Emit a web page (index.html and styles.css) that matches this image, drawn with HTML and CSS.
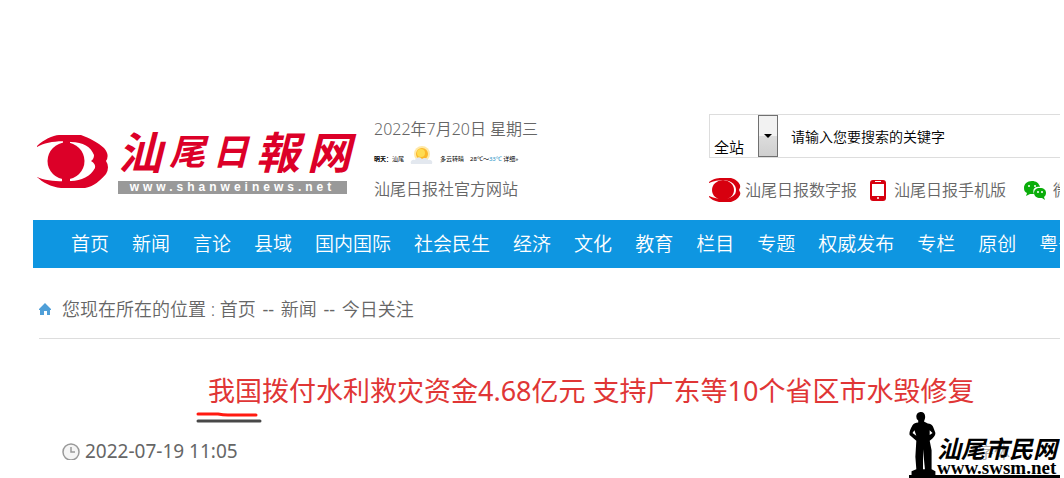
FILE: index.html
```html
<!DOCTYPE html>
<html lang="zh-CN">
<head>
  <meta charset="UTF-8">
  <title>我国拨付水利救灾资金4.68亿元 支持广东等10个省区市水毁修复</title>
  <meta name="viewport" content="width=device-width, initial-scale=1">
  <link rel="stylesheet" href="styles.css">
</head>
<body>

<div class="page">
  <header class="header">
    <a class="logo" href="#">
      <svg class="logo-eye" viewBox="0 0 72 54" aria-hidden="true">
        <path fill="#dc0028" d="M0 11C6 5 16 0 22 0H44C52 3 62 8 67 13Q73 20 69 26Q73 32 69 39C64 45 56 52 48 53H24C14 52 5 47 0 42Z"/>
        <path fill="#fff" d="M0 12C8 7 24 5 34 7C46 7 54 12 57 20Q57 24 54 26Q59 29 58 33C54 41 44 46 34 46C24 47 8 46 0 42Z"/>
        <circle cx="29" cy="26" r="18.5" fill="#dc0028"/>
        <path fill="#dc0028" d="M26 4h7v6h-7zM25 42h8v6h-8z"/>
      </svg>
      <span class="logo-text">
        <span class="logo-name"><b>汕</b><b class="small">尾</b><b class="small">日</b><b>報</b><b>网</b></span>
        <span class="logo-url">www.shanweinews.net</span>
      </span>
    </a>

    <div class="info">
      <div>2022年7月20日 星期三</div>
      <div class="weather">
        <span><b>明天：</b>汕尾</span>
        <svg class="sun" viewBox="0 0 24 20" aria-hidden="true">
          <circle cx="12" cy="8" r="8" fill="#ffe9a8"/>
          <circle cx="12" cy="8" r="6" fill="#fbb829"/>
          <circle cx="11" cy="7" r="4" fill="#ffdc50"/>
          <path fill="#e3e8ef" d="M1 18a3 3 0 0 1 4-4 4 4 0 0 1 7-1 4 4 0 0 1 6 1 3 3 0 0 1 4 4z"/>
        </svg>
        <span class="sky">多云转晴</span>
        <span>28℃～<i>33℃</i> 详细»</span>
      </div>
      <div>汕尾日报社官方网站</div>
    </div>

    <div class="tools">
      <form class="search">
        <div class="scope">
          <select aria-label="搜索范围">
            <option>全站</option>
          </select>
          <span class="arrow"></span>
        </div>
        <input type="text" aria-label="关键字" value="请输入您要搜索的关键字">
      </form>
      <div class="links">
        <a href="#">
          <svg class="icon-eye" viewBox="0 0 32 24" aria-hidden="true">
            <path fill="#d7000f" d="M0 4C5 0 10 0 14 0H22C26 1 30 4 31 7Q32 9 30 12Q32 15 31 17C29 21 25 23 22 24H10C5 23 2 21 0 19Z"/>
            <path fill="#fff" d="M0 5C4 3 10 2 15 2C23 3 27 7 27 12S23 20 15 21C10 21 4 20 0 18Z"/>
            <ellipse cx="14" cy="12" rx="11" ry="10" fill="#d7000f"/>
          </svg>
          汕尾日报数字报
        </a>
        <a href="#">
          <svg class="icon-phone" viewBox="0 0 16 21" aria-hidden="true">
            <rect width="16" height="21" rx="3" fill="#d7000f"/>
            <path fill="#fff" d="M2 4h12v12H2zM5 1h6v1H5z"/>
            <circle cx="8" cy="18" r="1" fill="#fff"/>
          </svg>
          汕尾日报手机版
        </a>
        <a href="#">
          <svg class="icon-wechat" viewBox="0 0 22 19" aria-hidden="true">
            <path fill="#0aad0a" d="M8 0C3 0 0 3 0 7c0 3 1 4 3 5l-1 3 4-2h4C8 8 11 5 16 6C15 2 12 0 8 0z"/>
            <path fill="#0aad0a" d="M16 7c-4 0-6 2-6 5s3 5 6 5l2 0 3 2-1-3c1-1 2-2 2-4 0-3-2-5-6-5z"/>
            <g fill="#fff"><circle cx="5" cy="5" r="1"/><circle cx="11" cy="5" r="1"/><circle cx="14" cy="11" r="1"/><circle cx="18" cy="11" r="1"/></g>
          </svg>
          微信
        </a>
      </div>
    </div>
  </header>

  <nav class="nav">
    <ul>
      <li><a href="#">首页</a></li>
      <li><a href="#">新闻</a></li>
      <li><a href="#">言论</a></li>
      <li><a href="#">县域</a></li>
      <li><a href="#">国内国际</a></li>
      <li><a href="#">社会民生</a></li>
      <li><a href="#">经济</a></li>
      <li><a href="#">文化</a></li>
      <li><a href="#">教育</a></li>
      <li><a href="#">栏目</a></li>
      <li><a href="#">专题</a></li>
      <li><a href="#">权威发布</a></li>
      <li><a href="#">专栏</a></li>
      <li><a href="#">原创</a></li>
      <li><a href="#">粤省</a></li>
    </ul>
  </nav>

  <div class="crumbs">
    <svg class="icon-home" viewBox="0 0 12 12" aria-hidden="true">
      <path fill="#4f9fd8" d="M6 0l6 6v1h-1v5H8V8H5v4H1V7H0V6z"/>
    </svg>
    <div>您现在所在的位置 : <a href="#">首页</a> <span class="sep">--</span> <a href="#">新闻</a> <span class="sep">--</span> <a href="#">今日关注</a></div>
  </div>

  <main class="article">
    <h1><span class="marked">我国<svg class="marks" viewBox="0 0 66 12" aria-hidden="true">
      <path d="M2 3H22Q27 4 32 4H60" stroke="#ff1a10"/>
      <path d="M2 10H64" stroke="#484848"/>
    </svg></span>拨付水利救灾资金4.68亿元 支持广东等10个省区市水毁修复</h1>
    <div class="meta">
      <svg class="icon-clock" viewBox="0 0 18 17" aria-hidden="true">
        <circle cx="9" cy="9" r="8" fill="#f5f5f5" stroke="#999" stroke-width="1.5"/>
        <path d="M9 4v5h4" fill="none" stroke="#999" stroke-width="1.5"/>
      </svg>
      <time datetime="2022-07-19T11:05">2022-07-19 11:05</time>
      <span class="font-size">【字体</span>
    </div>
  </main>

  <div class="watermark">
    <svg class="statue" viewBox="0 0 28 66" aria-hidden="true">
      <path d="M7 5C7 1 10 0 12 0C15 0 17 3 16 7L15 10L19 12C24 12 25 16 27 22Q27 26 21 30L23 40L23 60L27 62V66H2V62L7 60L6 47L7 30L0 24Q-1 21 3 14Q5 11 9 11L9 9Q7 8 7 5ZM5 19L3 22L7 25ZM21 19V24L24 22Z" fill-rule="evenodd"/>
      <path d="M14 39L16 60H14Z" fill="#fff"/>
    </svg>
    <div class="watermark-text">
      <span class="watermark-name">汕尾市民网</span>
      <span class="watermark-url">www.swsm.net</span>
    </div>
  </div>
</div>

</body>
</html>
```
FILE: styles.css
```css
body {
  margin: 0;
  background: #fff;
  color: #666;
  font-family: "Noto Sans", "Noto Sans CJK SC", sans-serif;
  font-size: 16px;
  font-weight: 350;
}

a {
  color: inherit;
  text-decoration: none;
}

svg {
  flex: none;
}

.page {
  position: relative;
  margin: 0 4px 0 33px;
  padding-top: 114px;
  overflow: hidden;
}

/* header */
.header {
  display: flex;
  height: 106px;
}

.logo {
  display: flex;
  flex: none;
  width: 314px;
  margin: 8px 23px 0 4px;
}

.logo-eye {
  width: 72px;
  height: 54px;
  margin: 13px 9px 0 0;
}

.logo-text {
  flex: 1;
}

.logo-name {
  display: flex;
  align-items: center;
  justify-content: space-between;
  height: 59px;
  color: #dc0028;
  font-size: 44px;
  font-style: italic;
  line-height: 56px;
}

.logo-name b {
  font-weight: 700;
}

.logo-name .small {
  font-size: 36px;
}

.logo-url {
  display: block;
  width: 229px;
  background: #999;
  color: #fff;
  font: bold 12px/13px "Liberation Sans", sans-serif;
  letter-spacing: 4px;
  text-align: center;
}

.info {
  flex: none;
  width: 335px;
  line-height: 30px;
}

.weather {
  display: flex;
  align-items: center;
  height: 30px;
  color: #000;
  font-size: 6px;
  font-weight: 400;
}

.weather i {
  color: #1a8fc4;
  font-style: normal;
}

.sun {
  width: 24px;
  height: 20px;
  margin: 0 6px 6px;
}

.sky {
  margin-right: 6px;
}

.tools {
  flex: 1;
  min-width: 0;
}

.search {
  display: flex;
  height: 42px;
  border: 1px solid #ddd;
  border-right: 0;
}

.scope {
  position: relative;
  flex: none;
  width: 68px;
}

.scope select {
  width: 100%;
  height: 42px;
  padding: 22px 0 0 4px;
  border: 0;
  background: none;
  color: #000;
  font: 15px/20px "Noto Sans CJK SC", sans-serif;
  font-weight: 350;
  appearance: none;
}

.arrow {
  position: absolute;
  top: 0;
  right: 0;
  display: flex;
  align-items: center;
  justify-content: center;
  width: 18px;
  height: 40px;
  border: 1px solid #707070;
  background: linear-gradient(#f2f2f2 50%, #ddd 50%, #cfcfcf);
  pointer-events: none;
}

.arrow::before {
  content: "";
  border: 4px solid transparent;
  border-top-color: #000;
  border-bottom: 0;
}

.search input {
  flex: 1;
  min-width: 0;
  padding: 0 0 0 13px;
  border: 0;
  background: none;
  color: #000;
  font: 14px "Noto Sans CJK SC", sans-serif;
  font-weight: 350;
}

.links {
  display: flex;
  margin-top: 17px;
  line-height: 30px;
  white-space: nowrap;
}

.links a {
  display: flex;
  flex: none;
  align-items: center;
}

.icon-eye {
  width: 32px;
  height: 24px;
  margin-right: 4px;
}

.icon-phone {
  width: 16px;
  height: 21px;
  margin: 0 8px 0 13px;
}

.icon-wechat {
  width: 22px;
  height: 19px;
  margin: 0 7px 0 18px;
}

/* nav */
.nav {
  background: #0e96e1;
  overflow: hidden;
}

.nav ul {
  display: flex;
  gap: 23px;
  margin: 0;
  padding: 0 0 0 38px;
  list-style: none;
}

.nav li {
  flex: none;
}

.nav a {
  color: #fff;
  font-size: 19px;
  line-height: 48px;
}

/* breadcrumb */
.crumbs {
  display: flex;
  align-items: center;
  margin: 12px 0 0 6px;
  border-bottom: 1px solid #ddd;
  font-size: 18px;
  line-height: 58px;
}

.icon-home {
  width: 12px;
  height: 12px;
  margin-right: 11px;
}

.sep {
  margin: 0 2px;
  font-weight: 400;
}

/* article */
.article {
  padding: 32px 0 13px 29px;
}

h1 {
  margin: 0 0 0 146px;
  color: #e03636;
  font-size: 27px;
  font-weight: 400;
  line-height: 40px;
  white-space: nowrap;
}

.marked {
  position: relative;
}

.marks {
  position: absolute;
  left: -12px;
  bottom: -14px;
  width: 66px;
  height: 12px;
  fill: none;
  stroke-width: 3;
  stroke-linecap: round;
}

.meta {
  display: flex;
  align-items: center;
  height: 28px;
  margin-top: 26px;
  font-size: 19px;
}

.meta time {
  font-weight: 400;
}

.icon-clock {
  width: 18px;
  height: 17px;
  margin-right: 5px;
}

.font-size {
  margin-left: auto;
  padding-right: 50px;
  color: #aaa;
  font-size: 16px;
}

.watermark {
  position: absolute;
  right: 0;
  bottom: 0;
  display: flex;
  align-items: flex-end;
  width: 151px;
  border-bottom: 3px solid #000;
  color: #000;
}

.statue {
  width: 28px;
  height: 63px;
}

.watermark-text {
  flex: 1;
  white-space: nowrap;
}

.watermark-name {
  display: block;
  font-size: 24px;
  font-style: italic;
  font-weight: 700;
  line-height: 22px;
}

.watermark-url {
  display: block;
  font: bold 19px/15px "Liberation Serif", serif;
}
```
